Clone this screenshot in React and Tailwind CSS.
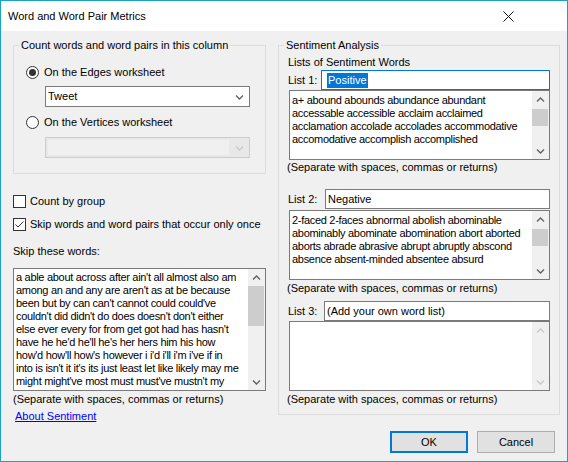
import React from "react";

const skipWords = [
  "a able about across after ain't all almost also am",
  "among an and any are aren't as at be because",
  "been but by can can't cannot could could've",
  "couldn't did didn't do does doesn't don't either",
  "else ever every for from get got had has hasn't",
  "have he he'd he'll he's her hers him his how",
  "how'd how'll how's however i i'd i'll i'm i've if in",
  "into is isn't it it's its just least let like likely may me",
  "might might've most must must've mustn't my",
];

const positiveWords = [
  "a+ abound abounds abundance abundant",
  "accessable accessible acclaim acclaimed",
  "acclamation accolade accolades accommodative",
  "accomodative accomplish accomplished",
];

const negativeWords = [
  "2-faced 2-faces abnormal abolish abominable",
  "abominably abominate abomination abort aborted",
  "aborts abrade abrasive abrupt abruptly abscond",
  "absence absent-minded absentee absurd",
];

function Chevron({ dir = "down", color = "#606060" }) {
  const d = dir === "up" ? "M1 5.5 4.5 2 8 5.5" : "M1 2.5 4.5 6 8 2.5";
  return (
    <svg width="9" height="8" viewBox="0 0 9 8">
      <path d={d} fill="none" stroke={color} strokeWidth="1.3" />
    </svg>
  );
}

function ScrollBar({ thumbClass, disabled }) {
  const color = disabled ? "#c8c8c8" : "#606060";
  return (
    <div className="w-[17px] shrink-0 bg-[#f0f0f0] flex flex-col">
      <div className="h-[17px] flex items-center justify-center">
        <Chevron dir="up" color={color} />
      </div>
      <div className="flex-1">
        {!disabled && <div className={`mr-[1px] bg-[#cdcdcd] ${thumbClass}`} />}
      </div>
      <div className="h-[17px] flex items-center justify-center">
        <Chevron color={color} />
      </div>
    </div>
  );
}

function WordBox({ lines, className, textClass, thumbClass, disabled }) {
  return (
    <div className={`flex border border-[#7a7a7a] bg-white ${className}`}>
      <div
        className={`flex-1 overflow-hidden leading-[13px] tracking-[-0.3px] whitespace-nowrap ${textClass}`}
      >
        {lines.map((l) => (
          <div key={l}>{l}</div>
        ))}
      </div>
      <ScrollBar thumbClass={thumbClass} disabled={disabled} />
    </div>
  );
}

function Radio({ checked, label, className }) {
  return (
    <div className={`flex items-center h-[16px] ml-[12px] ${className}`}>
      <div className="w-[13px] h-[13px] rounded-full border border-[#333] bg-white flex items-center justify-center">
        {checked && <div className="w-[7px] h-[7px] rounded-full bg-[#333]" />}
      </div>
      <span className="ml-[5px] leading-[15px]">{label}</span>
    </div>
  );
}

function Check({ checked, label, className }) {
  return (
    <div className={`flex items-center h-[16px] ${className}`}>
      <div className="w-[13px] h-[13px] shrink-0 border border-[#333] bg-white">
        {checked && (
          <svg width="11" height="11" viewBox="0 0 11 11">
            <path d="M1.5 5.5 4 8 9.5 2.5" fill="none" stroke="#333" strokeWidth="1" />
          </svg>
        )}
      </div>
      <span className="ml-[4px] leading-[15px] whitespace-nowrap">{label}</span>
    </div>
  );
}

const Note = ({ className }) => (
  <div className={`leading-[15px] ${className}`}>(Separate with spaces, commas or returns)</div>
);

export default function App() {
  return (
    <div className="w-[568px] h-[462px] flex flex-col border border-[#1ba1c4] bg-[#f0f0f0] text-[11px] text-black font-['Liberation_Sans',sans-serif] overflow-hidden">
      {/* title bar */}
      <div className="h-[30px] shrink-0 bg-white flex items-center justify-between pl-[7px] pr-[53px]">
        <span>Word and Word Pair Metrics</span>
        <svg width="11" height="11" viewBox="0 0 11 11">
          <path d="M0.5 0.5 10.5 10.5 M10.5 0.5 0.5 10.5" stroke="#111" strokeWidth="1" />
        </svg>
      </div>

      <div className="flex-1 flex pl-[12px]">
        {/* left column */}
        <div className="w-[253px] flex flex-col">
          <fieldset className="mt-[7px] border border-[#dcdcdc] pb-[15px] min-w-0">
            <legend className="ml-[5px] px-[2px] leading-[15px]">
              Count words and word pairs in this column
            </legend>
            <Radio checked label="On the Edges worksheet" className="mt-[11px]" />
            <div className="mt-[6px] ml-[31px] w-[205px] h-[21px] border border-[#7a7a7a] bg-white flex items-center justify-between pl-[2px] pr-[5px]">
              <span>Tweet</span>
              <Chevron />
            </div>
            <Radio label="On the Vertices worksheet" className="mt-[7px]" />
            <div className="mt-[7px] ml-[31px] w-[205px] h-[21px] border border-[#cccccc] bg-[#e8e8e8] flex items-center justify-between pl-[2px] pr-[5px]">
              <div className="w-[181px] h-[15px] bg-[#f0f0f0]" />
              <Chevron color="#c8c8c8" />
            </div>
          </fieldset>

          <Check label="Count by group" className="mt-[19px]" />
          <Check checked label="Skip words and word pairs that occur only once" className="mt-[7px]" />
          <div className="mt-[12px] leading-[15px]">Skip these words:</div>
          <WordBox
            lines={skipWords}
            className="mt-[9px] w-[253px] h-[123px]"
            textClass="pl-[2px] pt-[2px]"
            thumbClass="h-[40px]"
          />
          <Note className="mt-[1px]" />
          <a href="#" className="mt-[2px] ml-[2px] leading-[15px] text-[#0000ff] underline self-start">
            About Sentiment
          </a>
        </div>

        {/* right column */}
        <div className="ml-[12px] w-[282px] flex flex-col">
          <fieldset className="mt-[7px] border border-[#dcdcdc] pb-[7px] min-w-0">
            <legend className="ml-[5px] px-[2px] leading-[15px]">Sentiment Analysis</legend>
            <div className="mt-[2px] pl-[9px] leading-[15px]">Lists of Sentiment Words</div>

            <div className="flex items-center h-[20px]">
              <span className="w-[42px] pl-[9px] leading-[15px]">List 1:</span>
              <div className="w-[229px] h-[20px] border border-[#0078d7] bg-white flex items-center">
                <span className="ml-[5px] px-[1px] leading-[15px] bg-[#0078d7] text-white">Positive</span>
              </div>
            </div>
            <WordBox
              lines={positiveWords}
              className="ml-[10px] w-[261px] h-[70px]"
              textClass="pl-[2px] pt-[3px]"
              thumbClass="mt-[1px] h-[17px]"
            />
            <Note className="pl-[8px]" />

            <div className="mt-[14px] flex items-center h-[20px]">
              <span className="w-[46px] pl-[9px] leading-[15px]">List 2:</span>
              <div className="w-[225px] h-[20px] border border-[#7a7a7a] bg-white flex items-center pl-[2px]">
                Negative
              </div>
            </div>
            <WordBox
              lines={negativeWords}
              className="mt-[1px] ml-[10px] w-[261px] h-[70px]"
              textClass="pl-[2px] pt-[3px]"
              thumbClass="mt-[1px] h-[17px]"
            />
            <Note className="mt-[1px] pl-[8px]" />

            <div className="mt-[5px] flex items-center h-[20px]">
              <span className="w-[45px] pl-[9px] leading-[15px]">List 3:</span>
              <div className="w-[226px] h-[20px] border border-[#7a7a7a] bg-white flex items-center pl-[2px]">
                (Add your own word list)
              </div>
            </div>
            <WordBox lines={[]} className="ml-[10px] w-[261px] h-[70px]" disabled />
            <Note className="mt-[1px] pl-[8px]" />
          </fieldset>

          <div className="mt-[16px] pr-[5px] flex justify-end gap-[9px]">
            <button className="w-[78px] h-[22px] border-2 border-[#0078d7] bg-[#e1e1e1]">OK</button>
            <button className="w-[78px] h-[22px] border border-[#adadad] bg-[#e1e1e1]">Cancel</button>
          </div>
        </div>
      </div>
    </div>
  );
}
